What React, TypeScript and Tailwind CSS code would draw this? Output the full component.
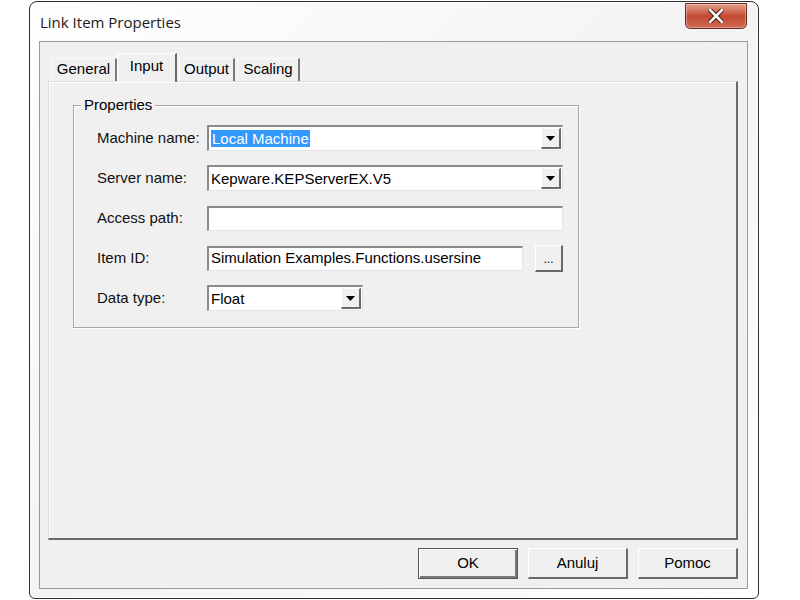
import React from 'react';

const font = { fontFamily: '"Liberation Sans", Arial, sans-serif' };

const sunken =
  'border-t-2 border-l-2 border-b border-r border-t-[#8a8a8a] border-l-[#8a8a8a] border-b-[#e3e3e3] border-r-[#e3e3e3] bg-white';

const DropArrow = () => (
  <div className="w-[20px] h-[21px] mr-[1px] bg-[#f0f0f0] border-t border-l border-b-2 border-r-2 border-t-white border-l-white border-b-[#6a6a6a] border-r-[#6a6a6a] flex items-center justify-center">
    <svg width="9" height="5" viewBox="0 0 9 5">
      <polygon points="0,0 9,0 4.5,5" fill="#000" />
    </svg>
  </div>
);

const Combo = ({ w, value, selected }: { w: string; value: string; selected?: boolean }) => (
  <div className={`${w} h-[26px] ${sunken} flex items-center justify-between`}>
    <span className="pl-[2px] text-[15px] leading-[20px]">
      {selected ? <span className="bg-[#3399ff] text-white px-[1px]">{value}</span> : value}
    </span>
    <DropArrow />
  </div>
);

const Row = ({ label, children }: { label: string; children: React.ReactNode }) => (
  <div className="flex items-center h-[26px]">
    <div className="w-[110px] pl-[23px] text-[15px] text-[#111] shrink-0 box-content">{label}</div>
    {children}
  </div>
);

const Tab = ({ label, active, w }: { label: string; active?: boolean; w: string }) =>
  active ? (
    <div className={`${w} h-[29px] -mb-px bg-[#f0f0f0] border-t border-l border-t-white border-l-white border-r-2 border-r-[#6a6a6a] flex items-start justify-center pt-[2px] text-[15px] leading-[20px] relative z-10`}>
      {label}
    </div>
  ) : (
    <div className={`${w} h-[23px] mt-[5px] bg-[#f0f0f0] border-t border-l border-t-[#fafafa] border-l-[#fafafa] border-r-2 border-r-[#7a7a7a] flex items-start justify-center pt-[1px] text-[15px] leading-[18px]`}>
      {label}
    </div>
  );

const Btn = ({ label, def }: { label: string; def?: boolean }) => (
  <div
    className={`w-[100px] h-[31px] bg-[#f0f0f0] flex items-center justify-center text-[15px] ${
      def
        ? 'border border-[#555] shadow-[inset_1px_1px_0_#fff,inset_-2px_-2px_0_#7a7a7a]'
        : 'border-t border-l border-t-white border-l-white border-b-2 border-r-2 border-b-[#6a6a6a] border-r-[#6a6a6a]'
    }`}
  >
    {label}
  </div>
);

export default function App() {
  return (
    <div className="w-[800px] h-[600px] bg-white overflow-hidden" style={font}>
      <div className="ml-[29px] mt-[1px] w-[730px] h-[598px] border border-[#2f2f2f] rounded-t-[8px] rounded-b-[6px] bg-gradient-to-br from-white via-[#f3f3f3] to-white flex flex-col shadow-[inset_0_0_0_1px_#fdfdfd]">
        <div className="h-[39px] flex items-start">
          <div className="pl-[10px] pt-[9px] text-[15px] text-[#1a1a1a]" style={{ fontFamily: '"Open Sans", "Noto Sans", sans-serif' }}>
            Link Item Properties
          </div>
          <div className="ml-auto mr-[11px] mt-[1px] w-[62px] h-[26px] rounded-b-[5px] border border-[#6b2a20] bg-gradient-to-b from-[#e3a08e] via-[#c24a32] to-[#cf6a52] flex items-center justify-center shadow-[inset_0_0_0_1px_rgba(255,255,255,0.35)]">
            <svg width="16" height="14" viewBox="0 0 16 14">
              <path d="M2 1 L14 13 M14 1 L2 13" stroke="#4a1a12" strokeWidth="4.5" strokeLinecap="square" />
              <path d="M2 1 L14 13 M14 1 L2 13" stroke="#f4f4f4" strokeWidth="2.6" strokeLinecap="square" />
            </svg>
          </div>
        </div>
        <div className="mx-[9px] w-[709px] h-[548px] border border-[#9a9a9a] bg-[#f0f0f0] flex flex-col px-[8px]">
          <div className="flex items-end h-[39px] pl-[3px]">
            <Tab label="General" w="w-[66px]" />
            <Tab label="Input" w="w-[60px]" active />
            <div className="w-[2px]" />
            <Tab label="Output" w="w-[56px]" />
            <div className="w-[2px]" />
            <Tab label="Scaling" w="w-[63px]" />
          </div>
          <div className="w-[690px] h-[459px] border-t border-l border-t-[#dcdcdc] border-l-[#dcdcdc] border-b-2 border-r-2 border-b-[#6a6a6a] border-r-[#6a6a6a] shadow-[inset_1px_1px_0_#fff] pt-[23px] pl-[24px]">
            <div className="relative w-[506px] h-[223px] border border-[#a8a8a8] shadow-[inset_1px_1px_0_#fff,1px_1px_0_#fff] pt-[19px]">
              <div className="absolute -top-[11px] left-[7px] px-[3px] bg-[#f0f0f0] text-[15px] leading-[20px]">Properties</div>
              <div className="flex flex-col gap-[14px]">
                <Row label="Machine name:">
                  <Combo w="w-[356px]" value="Local Machine" selected />
                </Row>
                <Row label="Server name:">
                  <Combo w="w-[356px]" value="Kepware.KEPServerEX.V5" />
                </Row>
                <Row label="Access path:">
                  <div className={`w-[356px] h-[25px] ${sunken}`} />
                </Row>
                <Row label="Item ID:">
                  <div className={`w-[316px] h-[25px] ${sunken} flex items-center pl-[2px] text-[15px]`}>
                    Simulation Examples.Functions.usersine
                  </div>
                  <div className="ml-[12px] w-[28px] h-[27px] bg-[#f0f0f0] border-t border-l border-t-white border-l-white border-b-2 border-r-2 border-b-[#6a6a6a] border-r-[#6a6a6a] flex items-end justify-center pb-[5px] text-[12px] leading-none">
                    ...
                  </div>
                </Row>
                <Row label="Data type:">
                  <Combo w="w-[156px]" value="Float" />
                </Row>
              </div>
            </div>
          </div>
          <div className="flex justify-end gap-[10px] pt-[8px] pr-[1px]">
            <Btn label="OK" def />
            <Btn label="Anuluj" />
            <Btn label="Pomoc" />
          </div>
        </div>
      </div>
    </div>
  );
}
